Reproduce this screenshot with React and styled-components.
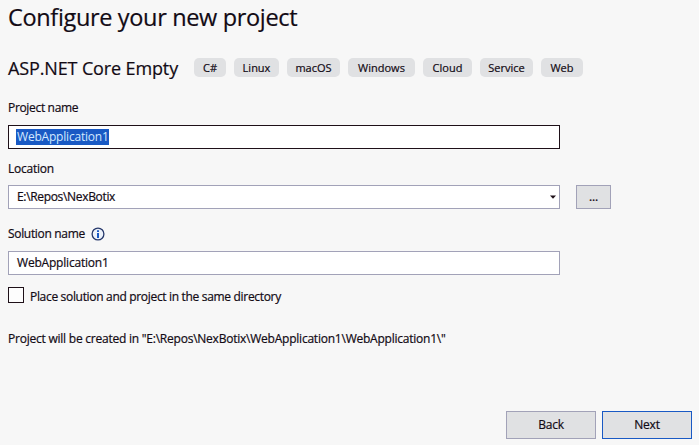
import React from "react";
import styled, { createGlobalStyle } from "styled-components";

const Global = createGlobalStyle`
  * { box-sizing: border-box; }
  body {
    margin: 0;
    background: #f7f7f7;
    overflow: hidden;
    color: #120a14;
    font: 12px/16px "Open Sans", "Noto Sans", sans-serif;
    -webkit-text-stroke: 0.2px currentColor;
  }
`;

const Page = styled.main`
  width: 699px;
  height: 445px;
  padding: 0 7px 6px 8px;
  display: flex;
  flex-direction: column;
  align-items: flex-start;
  background: #f7f7f7;
  white-space: nowrap;
`;

const Text = styled.span`
  letter-spacing: ${(p) => p.$track || 0}px;
`;

const Title = styled.h1`
  margin: 0;
  height: 58px;
  font-size: 23.5px;
  line-height: 34px;
  font-weight: 400;
  letter-spacing: -0.34px;
`;

const TemplateRow = styled.div`
  display: flex;
  height: 19px;
`;

const TemplateName = styled.h2`
  margin: 0;
  width: 186px;
  font-size: 18px;
  line-height: 21px;
  font-weight: 400;
  letter-spacing: -0.13px;
`;

const Tags = styled.div`
  display: flex;
  gap: 8px;
`;

const Tag = styled.span`
  width: ${(p) => p.$width}px;
  height: 19px;
  border-radius: 5px;
  background: #e0e1e3;
  font-size: 11px;
  line-height: 19px;
  text-align: center;
`;

const Label = styled.label`
  display: flex;
  align-items: center;
  gap: 6px;
  height: 16px;
  margin: ${(p) => p.$top}px 0 ${(p) => p.$bottom}px;
`;

const Row = styled.div`
  display: flex;
  gap: 16px;
`;

const Field = styled.div`
  display: flex;
  align-items: center;
  justify-content: space-between;
  width: 552px;
  height: 24px;
  padding: 0 3px 0 8px;
  border: 1px solid ${(p) => (p.$focused ? "#1e1018" : "#a2a2b8")};
  background: #fff;
`;

const Selection = styled.span`
  height: 16px;
  margin-left: -1px;
  padding-left: 1px;
  background: #1959c4;
  color: #d3e8ff;
  line-height: 16px;
  letter-spacing: ${(p) => p.$track}px;
  -webkit-text-stroke: 0;
`;

const Button = styled.button`
  width: ${(p) => p.$width}px;
  height: ${(p) => p.$height}px;
  padding: 0;
  border: 1px solid ${(p) => (p.$primary ? "#1959c4" : "#a2a2b8")};
  background: #e0e1e3;
  color: inherit;
  font: inherit;
  letter-spacing: -0.2px;
`;

const CheckRow = styled.label`
  display: flex;
  gap: 6px;
  height: 16px;
  margin: 12px 0 28px;
  line-height: 20px;
`;

const CheckBox = styled.span`
  width: 16px;
  height: 16px;
  border: 1px solid #1e1018;
  background: #fdfdfd;
`;

const Footer = styled.footer`
  display: flex;
  gap: 6px;
  align-self: flex-end;
  margin-top: auto;
`;

const tags = [
  ["C#", 32],
  ["Linux", 45],
  ["macOS", 53],
  ["Windows", 67],
  ["Cloud", 49],
  ["Service", 53],
  ["Web", 42],
];

const InfoIcon = () => (
  <svg width="14" height="14" viewBox="0 0 14 14">
    <circle cx="7" cy="7" r="5.9" fill="#edf2fa" stroke="#26386b" strokeWidth="1.3" />
    <path d="M6 3.3h2v1.6H6zM6 6h2v5H6z" fill="#1959c4" />
  </svg>
);

const Arrow = () => (
  <svg width="6" height="4" viewBox="0 0 6 4">
    <path d="M0 .5h6L3 3.7z" fill="#1e1018" />
  </svg>
);

export default function App() {
  return (
    <Page>
      <Global />
      <Title>Configure your new project</Title>
      <TemplateRow>
        <TemplateName>ASP.NET Core Empty</TemplateName>
        <Tags>
          {tags.map(([name, width]) => (
            <Tag key={name} $width={width}>{name}</Tag>
          ))}
        </Tags>
      </TemplateRow>
      <Label $top={23} $bottom={9}><Text $track={-0.33}>Project name</Text></Label>
      <Field $focused><Selection $track={-0.2}>WebApplication1</Selection></Field>
      <Label $top={12} $bottom={8}><Text $track={-0.25}>Location</Text></Label>
      <Row>
        <Field><Text $track={-0.33}>E:\Repos\NexBotix</Text><Arrow /></Field>
        <Button $width={35} $height={24}>...</Button>
      </Row>
      <Label $top={17} $bottom={9}><Text $track={-0.32}>Solution name</Text><InfoIcon /></Label>
      <Field><Text $track={-0.2}>WebApplication1</Text></Field>
      <CheckRow>
        <CheckBox />
        <Text $track={-0.32}>Place solution and project in the same directory</Text>
      </CheckRow>
      <Text $track={-0.23}>Project will be created in "E:\Repos\NexBotix\WebApplication1\WebApplication1\"</Text>
      <Footer>
        <Button $width={90} $height={28}>Back</Button>
        <Button $width={90} $height={28} $primary>Next</Button>
      </Footer>
    </Page>
  );
}
